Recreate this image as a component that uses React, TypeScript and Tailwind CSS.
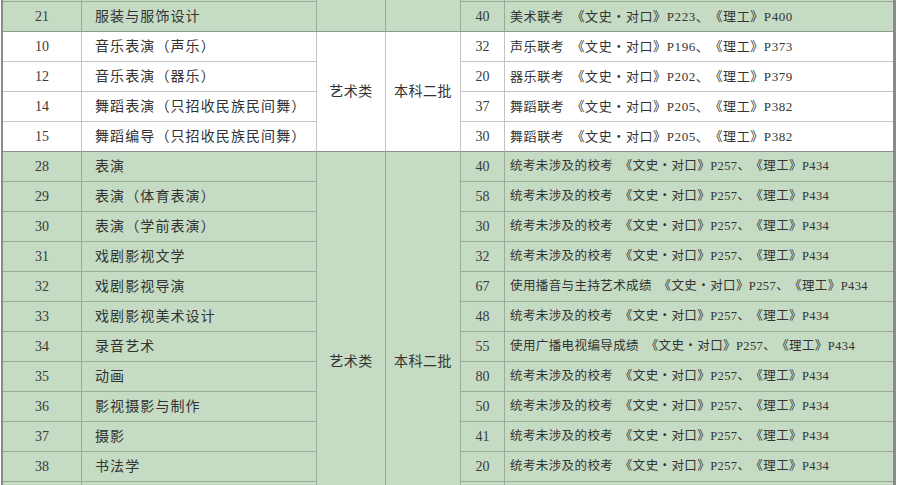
type Row = { no: string; name: string; plan: string; note: string; stub?: boolean };

type Group = {
  rows: Row[];
  tone: "green" | "white";
  type: string;
  batch: string;
  small?: boolean;
};

const mk = (no: string, name: string, plan: string, note: string): Row => ({ no, name, plan, note });
// row that only peeks in at the top/bottom edge of the crop
const stub = (key: string): Row => ({ no: key, name: "", plan: "", note: "", stub: true });

const school = "统考未涉及的校考\u2002《文史・对口》P257、《理工》P434";

const groups: Group[] = [
  {
    tone: "green",
    type: "",
    batch: "",
    rows: [
      stub("top"),
      mk("21", "服装与服饰设计", "40", "美术联考\u2002《文史・对口》P223、《理工》P400"),
    ],
  },
  {
    tone: "white",
    type: "艺术类",
    batch: "本科二批",
    rows: [
      mk("10", "音乐表演（声乐）", "32", "声乐联考\u2002《文史・对口》P196、《理工》P373"),
      mk("12", "音乐表演（器乐）", "20", "器乐联考\u2002《文史・对口》P202、《理工》P379"),
      mk("14", "舞蹈表演（只招收民族民间舞）", "37", "舞蹈联考\u2002《文史・对口》P205、《理工》P382"),
      mk("15", "舞蹈编导（只招收民族民间舞）", "30", "舞蹈联考\u2002《文史・对口》P205、《理工》P382"),
    ],
  },
  {
    tone: "green",
    type: "艺术类",
    batch: "本科二批",
    small: true,
    rows: [
      mk("28", "表演", "40", school),
      mk("29", "表演（体育表演）", "58", school),
      mk("30", "表演（学前表演）", "30", school),
      mk("31", "戏剧影视文学", "32", school),
      mk("32", "戏剧影视导演", "67", "使用播音与主持艺术成绩\u2002《文史・对口》P257、《理工》P434"),
      mk("33", "戏剧影视美术设计", "48", school),
      mk("34", "录音艺术", "55", "使用广播电视编导成绩\u2002《文史・对口》P257、《理工》P434"),
      mk("35", "动画", "80", school),
      mk("36", "影视摄影与制作", "50", school),
      mk("37", "摄影", "41", school),
      mk("38", "书法学", "20", school),
      stub("b1"),
      stub("b2"),
      stub("b3"),
    ],
  },
];

const font = { fontFamily: '"Liberation Serif", "Noto Sans CJK SC", serif' };

function GroupRows({ g }: { g: Group }) {
  const green = g.tone === "green";
  const bg = green ? "bg-[#c5dbc3]" : "bg-white";
  const line = green ? "border-[#9aab98]" : "border-[#c4c4c4]";
  const last = green ? "border-b-[#8f9a8e]" : "border-b-[#8e8e8e]";
  return (
    <>
      {g.rows.map((r, i) => {
        const bottom = i === g.rows.length - 1 ? last : "";
        const h = r.stub && i === 0 ? "h-[2px]" : "h-[30px]";
        const cell = `${h} p-0 border-r border-b ${line} ${bottom}`;
        return (
          <tr key={r.no} className={bg}>
            <td className={`${cell} text-center text-[14px] text-[#3a3a3a]`}>{r.no !== "top" && !r.stub ? r.no : ""}</td>
            <td className={`${cell} pl-[13px] text-[14px] tracking-[1.1px] text-[#333]`}>{r.name}</td>
            {i === 0 && (
              <>
                <td
                  rowSpan={g.rows.length}
                  className={`p-0 border-r border-b ${line} ${last} text-center text-[14px] tracking-[0.5px] text-[#333]`}
                >
                  {g.type}
                </td>
                <td
                  rowSpan={g.rows.length}
                  className={`p-0 border-r border-b ${line} ${last} text-center text-[14px] tracking-[0.5px] text-[#333]`}
                >
                  {g.batch}
                </td>
              </>
            )}
            <td className={`${cell} text-center text-[14px] text-[#3a3a3a]`}>{r.plan}</td>
            <td
              className={`${h} p-0 pl-[5px] border-b ${line} ${bottom} whitespace-nowrap text-[#333] [text-spacing-trim:space-all] ${
                g.small ? "text-[12.5px] tracking-[0.4px]" : "text-[13px] tracking-[0.6px]"
              }`}
            >
              {r.note}
            </td>
          </tr>
        );
      })}
    </>
  );
}

export default function App() {
  return (
    <div className="h-[485px] w-[898px] overflow-hidden bg-white" style={font}>
      <div className="ml-[1px] w-[895px] border-l-2 border-r-[3px] border-[#8a8a8a]">
        <table className="w-full table-fixed border-separate border-spacing-0">
          <colgroup>
            <col className="w-[79px]" />
            <col className="w-[235px]" />
            <col className="w-[69px]" />
            <col className="w-[75px]" />
            <col className="w-[44px]" />
            <col />
          </colgroup>
          <tbody>
            {groups.map((g, i) => (
              <GroupRows key={i} g={g} />
            ))}
          </tbody>
        </table>
      </div>
    </div>
  );
}
